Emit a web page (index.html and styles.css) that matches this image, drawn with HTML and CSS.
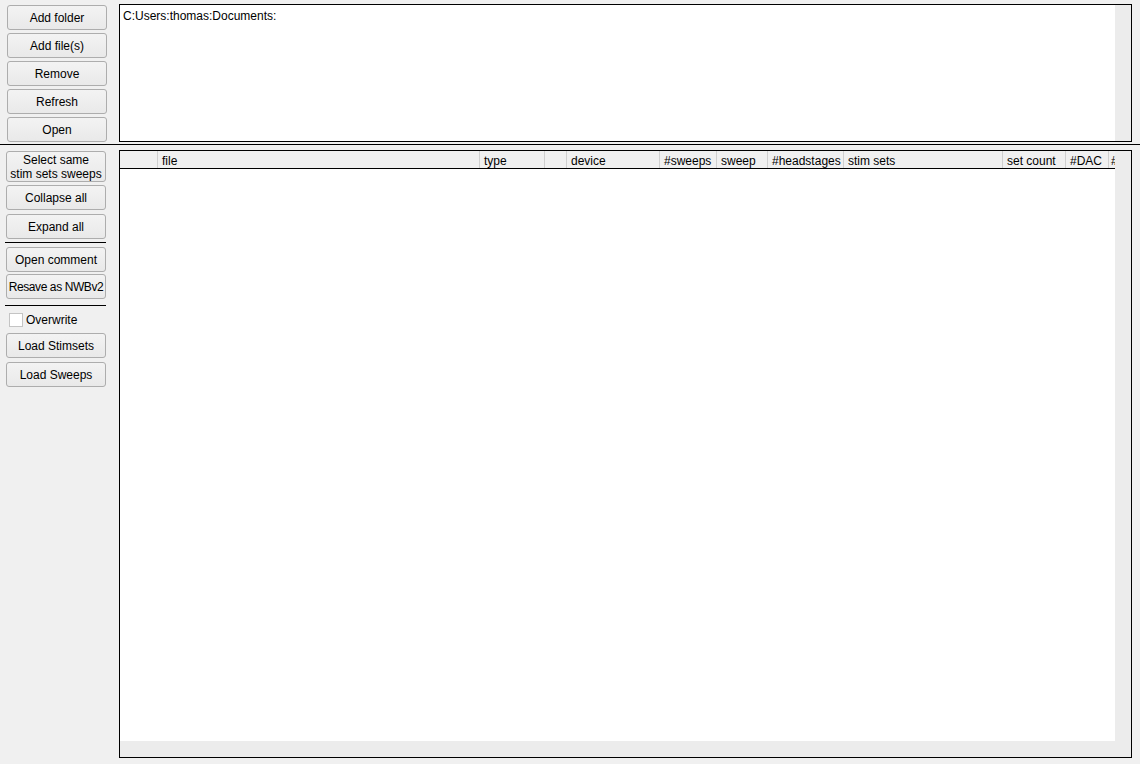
FILE: index.html
```html
<!DOCTYPE html>
<html lang="en">

<head>
 <meta charset="UTF-8">
 <meta name="viewport" content="width=device-width, initial-scale=1.0">
 <title>Data Browser</title>
 <link rel="stylesheet" href="styles.css">
</head>

<body>

 <section class="top">
  <div class="btn-col top-col">
   <button class="btn">Add folder</button>
   <button class="btn">Add file(s)</button>
   <button class="btn">Remove</button>
   <button class="btn">Refresh</button>
   <button class="btn">Open</button>
  </div>
  <div class="path-box">
   <div class="path-list">
    <div class="path-item">C:Users:thomas:Documents:</div>
   </div>
   <div class="vscroll"></div>
  </div>
 </section>

 <div class="divider"></div>

 <section class="bottom">
  <div class="btn-col side-col">
   <button class="btn btn-tall">Select same<br>stim sets sweeps</button>
   <button class="btn btn-collapse">Collapse all</button>
   <button class="btn btn-expand">Expand all</button>
   <div class="sep sep-first"></div>
   <button class="btn btn-comment">Open comment</button>
   <button class="btn btn-resave">Resave as NWBv2</button>
   <div class="sep sep-second"></div>
   <label class="check"><span class="box"></span>Overwrite</label>
   <button class="btn btn-stimsets">Load Stimsets</button>
   <button class="btn">Load Sweeps</button>
  </div>

  <div class="table-box">
   <div class="table-main">
    <div class="thead">
     <div class="th" style="width: 38px"></div>
     <div class="th" style="width: 322px">file</div>
     <div class="th" style="width: 65px">type</div>
     <div class="th" style="width: 22px"></div>
     <div class="th" style="width: 93px">device</div>
     <div class="th" style="width: 57px">#sweeps</div>
     <div class="th" style="width: 51px">sweep</div>
     <div class="th" style="width: 76px">#headstages</div>
     <div class="th" style="width: 159px">stim sets</div>
     <div class="th" style="width: 63px">set count</div>
     <div class="th" style="width: 43px">#DAC</div>
     <div class="th th-last">#</div>
    </div>
    <div class="tbody"></div>
   </div>
   <div class="vscroll"></div>
   <div class="hscroll"></div>
   <div class="corner"></div>
  </div>
 </section>

</body>

</html>
```

FILE: styles.css
```css
:root {
 --ui-font: "Liberation Sans", Arial, sans-serif;
 --panel-bg: #f0f0f0;
 --scroll-bg: #ececec;
 --btn-border: #adadad;
}

html {
 box-sizing: border-box;
 font-family: var(--ui-font);
 font-size: 12px;
}

*,
*::before,
*::after {
 box-sizing: inherit;
}

body {
 margin: 0;
 height: 764px;
 overflow: hidden;
 background-color: var(--panel-bg);
 color: #000;
}

/* - - - - Columna de botones - - - - */
.btn-col {
 display: flex;
 flex-direction: column;
 width: 119px;
 flex-shrink: 0;
}

.top-col {
 padding: 1px 0 0 7px;
 gap: 3px;
}

.side-col {
 padding: 1px 0 0 6px;
}

.btn {
 flex-shrink: 0;
 width: 100px;
 height: 25px;
 margin: 0;
 padding: 0;
 font-family: var(--ui-font);
 font-size: 12px;
 color: #000;
 white-space: nowrap;
 background: linear-gradient(#f3f3f3, #e9e9e9);
 border: 1px solid var(--btn-border);
 border-radius: 3px;
 line-height: 14px;
}

.side-col .btn-tall {
 height: 31px;
 margin-bottom: 3px;
}

.btn-collapse {
 margin-bottom: 4px;
}

.btn-expand {
 margin-bottom: 3px;
}

.btn-comment {
 margin-bottom: 2px;
}

.btn-resave {
 margin-bottom: 6px;
 letter-spacing: -0.4px;
}

.btn-stimsets {
 margin-bottom: 4px;
}

.sep {
 flex-shrink: 0;
 width: 101px;
 height: 1px;
 margin-left: -1px;
 background-color: #000;
}

.sep-first {
 margin-bottom: 4px;
}

.sep-second {
 margin-bottom: 6px;
}

.check {
 display: flex;
 align-items: center;
 gap: 3px;
 height: 15px;
 margin: 0 0 6px 3px;
}

.check .box {
 width: 14px;
 height: 14px;
 background-color: #fff;
 border: 1px solid #c4c4c4;
}

/* - - - - Parte superior - - - - */
.top {
 display: flex;
 padding-top: 4px;
}

.path-box {
 display: flex;
 width: 1013px;
 height: 138px;
 border: 1px solid #000;
 background-color: #fff;
}

.path-list {
 flex: 1;
 padding: 4px 3px;
}

.path-item {
 line-height: 14px;
}

.vscroll {
 width: 16px;
 background-color: var(--scroll-bg);
}

.divider {
 height: 1px;
 margin-top: 2px;
 background-color: #000;
}

/* - - - - Tabla - - - - */
.bottom {
 display: flex;
 padding-top: 5px;
}

.table-box {
 display: grid;
 grid-template-columns: 1fr 16px;
 grid-template-rows: 1fr 16px;
 width: 1013px;
 height: 608px;
 border: 1px solid #000;
 background-color: #fff;
}

.table-main {
 overflow: hidden;
}

.thead {
 display: flex;
 height: 18px;
 background-color: var(--panel-bg);
 border-bottom: 1px solid #000;
 white-space: nowrap;
}

.th {
 flex-shrink: 0;
 height: 17px;
 padding: 3px 0 0 4px;
 line-height: 14px;
 border-right: 1px solid #cfcfcf;
 overflow: hidden;
}

.th-last {
 flex: 1;
 padding-left: 2px;
 border-right: none;
}

.hscroll,
.corner {
 background-color: var(--scroll-bg);
}
```
